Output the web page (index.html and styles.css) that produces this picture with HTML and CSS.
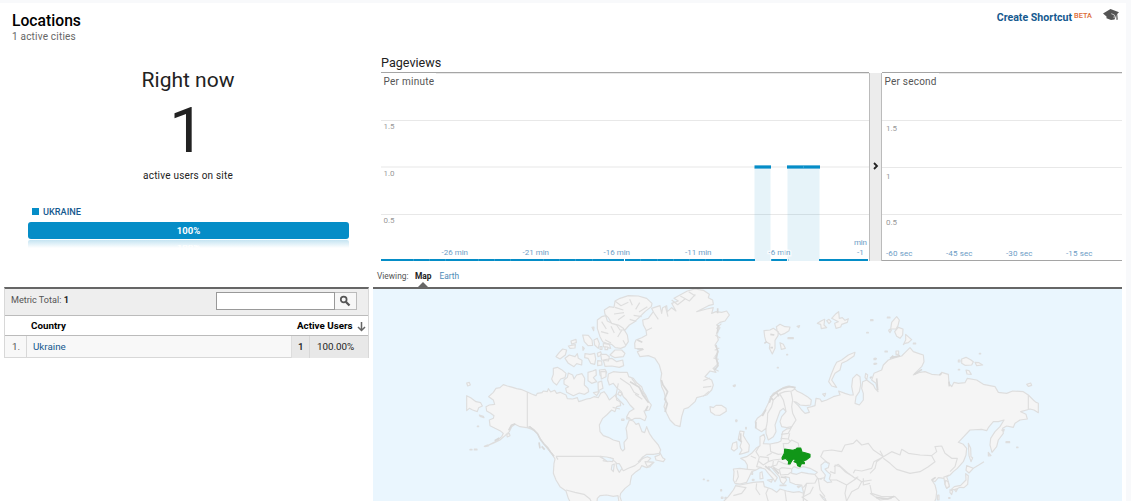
FILE: index.html
```html
<!DOCTYPE html>
<html lang="en">
<head>
<meta charset="utf-8">
<title>Locations</title>
<link rel="stylesheet" href="styles.css">
</head>
<body>
<main class="page">
  <header class="header">
    <div>
      <h1 class="title">Locations</h1>
      <div class="subtitle">1 active cities</div>
    </div>
    <div class="tools">
      <a class="shortcut">Create Shortcut</a><span class="beta">BETA</span>
      <svg class="cap" width="16" height="12" viewBox="0 0 16 12"><path d="M0 4.600 7.500 0 16 3.200 14.200 5l.6 5.500-1.300.5-.3-5.300-1.700 4.800L8 11 3.500 9.200V7.500z" fill="#555"/><path d="m8.300 4.700 3.200 1.300-.5 3" fill="none" stroke="#ddd" stroke-width=".8"/></svg>
    </div>
  </header>
  <div class="columns">
    <section class="left">
      <div class="now">
        <div class="now-label">Right now</div>
        <div class="now-count">1</div>
        <div class="now-caption">active users on site</div>
      </div>
      <div class="legend"><i class="swatch"></i>UKRAINE</div>
      <div class="bar">100%</div>
      <div class="reflection"><span>100%</span></div>
      <div class="table">
        <div class="filter">
          <span class="metric">Metric Total: <b>1</b></span>
          <span class="search"><input class="search-input" aria-label="Search"><button class="search-button" aria-label="Search"><svg width="12" height="12" viewBox="0 0 12 12" fill="none" stroke="#555"><circle cx="4.700" cy="4.500" r="2.900" stroke-width="1.700"/><path d="m7 7 3.500 3.500" stroke-width="2.300"/></svg></button></span>
        </div>
        <div class="row head"><span></span><span class="country">Country</span><span class="users">Active Users<svg width="9" height="11" viewBox="0 0 9 11" fill="none" stroke="#666" stroke-width="1.500"><path d="M4.500 1v8.500M1 6l3.500 3.500L8 6"/></svg></span></div>
        <div class="row data"><span class="index">1.</span><span class="name">Ukraine</span><span class="value">1</span><span class="percent">100.00%</span></div>
      </div>
    </section>
    <section class="right">
      <h2 class="chart-title">Pageviews</h2>
      <div class="charts">
        <svg class="minute" width="488" height="189" viewBox="381 72 488 189">
          <path d="M436 73.500H869M381 120.500H869M381 214.500H869" stroke="#e8e8e8"/>
          <path d="M381 167H869" stroke="#f3f3f3" stroke-width="2"/>
          <path d="M381 72.500H869" stroke="#a5a5a5"/>
          <path d="M754.500 167h16v94h-16zM787.500 167h32v94h-32z" fill="#058dc7" fill-opacity=".1"/>
          <path d="M381 260H755M771 260H787M819 260H868M754.500 167H771M787 167H820" stroke="#058dc7" stroke-width="2"/>
          <path d="M754.500 165.500H771M787 165.500H820M754.500 168.500H771M787 168.500H820" stroke="#62b6dc"/>
          <path d="M413.500 259v2m16-2v2m16-2v2m33-2v2m16-2v2m16-2v2m33-2v2m16-2v2m16-2v2m17-2v2m32-2v2m16-2v2m17-2v2m16-2v2m16-2v2m16-2v2m17-2v2m49-2v2m17-2v2M803.500 166v2" stroke="#55b1d9" stroke-opacity=".5"/>
          <path d="M624.500 259v2" stroke="#fff"/>
          <text class="chart-name" x="383.500" y="85" textLength="50.500">Per minute</text>
          <g class="y-label"><text x="383.500" y="129">1.5</text><text x="383.500" y="176">1.0</text><text x="383.500" y="223">0.5</text></g>
          <g class="x-label"><text x="441.500" y="255" textLength="26.500">-26 min</text><text x="522.500" y="255" textLength="26.500">-21 min</text><text x="603.500" y="255" textLength="26.500">-16 min</text><text x="685" y="255" textLength="26.500">-11 min</text><text class="halo" x="768.500" y="255" textLength="22">-6 min</text><text x="854" y="245" textLength="13">min</text><text x="857" y="255">-1</text></g>
        </svg>
        <div class="splitter"><svg width="6" height="8" viewBox="0 0 6 8"><path d="m1 1 3 3-3 3" fill="none" stroke="#222" stroke-width="1.800"/></svg></div>
        <svg class="second" width="240" height="189" viewBox="882 72 240 189">
          <path d="M939 73.500H1122M882 120.500H1122M882 167.500H1122M882 214.500H1122" stroke="#e8e8e8"/>
          <path d="M882 72.500H1122M882 260.500H1122" stroke="#a5a5a5"/>
          <text class="chart-name" x="884.500" y="85" textLength="52">Per second</text>
          <g class="y-label"><text x="886" y="131">1.5</text><text x="886" y="179">1</text><text x="886" y="225">0.5</text></g>
          <g class="x-label"><text x="886" y="256" textLength="26.500">-60 sec</text><text x="946" y="256" textLength="26.500">-45 sec</text><text x="1006" y="256" textLength="26.500">-30 sec</text><text x="1066" y="256" textLength="26.500">-15 sec</text></g>
        </svg>
      </div>
      <nav class="tabs"><span class="viewing">Viewing:</span><b class="map-tab">Map</b><span class="earth-tab">Earth</span></nav>
      <div class="map">
        <svg width="749" height="212" viewBox="373 289 749 212">
          <g transform="translate(460 285) scale(.33333)" class="land">
            <path d="M86 335 100 322 108 310 120 308 130 299 142 303 158 307 170 311 186 314 202 321 215 327 228 332 232 325 246 323 250 318 262 320 265 311 272 321 284 316 290 325 300 322 318 330 322 341 338 342 352 338 356 350 366 347 380 342 392 340 402 335 415 338 422 325 432 320 440 330 448 345 460 335 468 328 470 345 480 350 482 362 470 365 465 380 455 375 440 390 428 400 418 420 420 440 430 452 445 457 460 465 478 470 482 490 488 498 494 492 492 472 502 460 500 440 498 430 504 415 508 405 520 408 528 418 536 415 542 430 546 440 554 443 560 425 568 445 578 460 595 480 602 495 598 505 580 508 560 508 550 515 535 530 550 520 562 515 572 520 560 532 580 532 570 545 560 548 545 542 540 552 528 560 515 572 512 585 510 598 495 610 482 625 480 635 488 660H478L474 632 460 634 440 630 420 632 412 640 410 660H335L325 640 318 618 300 605 288 585 280 565 282 535 285 522 275 505 262 490 250 475 240 460 232 445 220 435 210 425 200 428 180 425 165 418 155 425 148 440 135 452 120 465 100 475 75 485 110 468 125 455 130 445 120 437 105 430 90 422 88 405 100 400 102 392 92 385 80 378 78 365 88 360 104 358 100 345Z"/>
            <path class="border" d="M202 321V428L220 435M288 514H417L432 522 450 518 465 530 480 545 490 557 505 550 525 542 540 530 548 515M288 514 294 524M318 615 345 622 372 628 390 642 396 655M428 527 445 530"/>
            <path class="thick" d="m208 425 14 10 11 12 8 16 11 14 10 10 10 15 10 12m-45-42 3 18m5-6 9 10m-88-78-12 5-8 15m-28 23-14 8"/>
            <path d="M20 332 32 338 48 350 62 353 67 363 56 368 52 380 38 375 28 370 20 377ZM20 294 28 292 31 300 23 303ZM58 390 70 394 72 398 60 394ZM52 423h4v2h-4zM30 493h6v2h-6zM43 492h8v3h-8zM73 484 82 480 85 483ZM140 448 148 445 150 452 142 456Z"/>
            <path d="M280 250 292 247 305 254 318 265 315 278 302 282 290 300 280 292 275 282 280 268ZM312 285 322 277 325 264 338 270 342 282 350 270 366 266 374 280 373 300 384 310 386 320 374 328 358 324 340 332 320 322 317 310 326 305 312 297ZM288 215 298 202 308 192 320 195 316 210 300 222ZM315 220 328 210 345 215 352 206 355 220 366 226 365 240 350 236 342 245 325 235ZM333 168 348 163 349 173 335 177ZM325 183 346 179 345 189 330 190ZM368 150 385 151 396 165 398 181 384 182 373 170ZM402 165 412 160 418 176 415 190 404 180ZM396 127 402 126 401 137ZM368 185 373 190 369 196ZM375 206 390 208 404 205 407 222 404 238 392 235 384 220 374 218ZM412 205 422 200 425 210 414 215ZM413 227 425 228 426 240 413 242ZM384 262 398 258 408 254 409 270 400 278 410 290 395 295 384 287ZM418 255 435 253 440 262 428 278 420 270ZM414 292 425 288 429 310 415 317ZM400 323 418 320 410 332Z"/>
            <path d="M412 105 425 95 437 92 442 108 455 115 475 120 490 130 502 150 505 170 495 185 482 190 466 188 455 178 440 175 428 170 420 155 412 130ZM433 75 448 65 462 67 465 48 480 40 505 32 535 33 560 40 576 55 574 65 555 80 540 95 524 110 508 120 495 135 480 135 470 120 455 115 445 98 435 88ZM450 210 465 195 485 195 495 205 490 215 465 218ZM430 225 455 220 470 230 488 225 491 242 478 247 455 243 435 244ZM430 175 448 178 452 190 430 185ZM422 208 438 208 448 215 445 228 425 225Z"/>
            <path class="border" d="m465 48 18 14 22-10m-40 15 25 8m-28 12 30-4m-18 22 20-14m15-48 8 18m22-8-12 20m35-8-25 16m8 14-24-4m8 18-20-6M425 110l14 22m-16 8 22 6m8-22 10 20m22-8-12 20m-38 8 18 10m36-8 8 14"/>
            <path d="M445 267 460 260 480 262 502 262 506 275 520 280 532 295 545 305 550 320 558 332 565 348 574 360 568 375 552 378 559 395 555 407 540 400 525 400 515 405 500 395 508 380 522 372 510 360 500 345 490 335 484 320 470 308 460 295 448 300 443 285ZM422 260 438 260 438 275 424 282Z"/>
          </g>
          <g transform="translate(600 285) scale(.33333)" class="land">
            <path d="M104 175 108 165 125 158 140 150 138 135 130 120 128 105 145 100 160 80 155 70 180 62 185 85 188 68 200 62 202 80 215 68 228 78 215 55 235 48 222 40 240 30 262 18 285 12 310 16 328 28 325 38 338 45 340 58 325 62 290 80 320 72 340 68 335 85 348 80 365 82 380 78 388 90 375 108 360 112 350 120 360 128 350 145 355 165 345 180 355 200 345 215 355 235 340 250 348 262 330 258 315 275 335 285 340 300 335 315 320 330 290 338 285 350 265 368 252 372 245 395 240 425 225 420 210 405 200 385 192 365 198 345 192 320 185 305 182 285 185 265 178 240 165 220 145 212 120 215 112 200 130 193 105 190Z"/>
            <path class="border" d="m215 45 18 14 22-17m-14-9 27 15 18-20m-20-8 20 13m-90 30 8 32m-44-14 15 22m-37 34 18-9m208-12-15 15m12 28-15-8m12 38-14 7m12 27-16-4m16 40-18-10m-8 30-20 8m24 17-25 3m18 12-18 15M60 280l30 20 12 22 15 8m-22-50 14 18m-4 30 22 15m-12-38 24 32m-84-42-8 40 25 25m-12 12-22-5"/>
            <path class="thick" d="m184 285 5 15 14 20-9 22 8 14-7 25M353 70v15m2 35-3 25m-4 35 5 20-4 20 5 22-10 12M90 290l28 17 10 22 18 24m-2 10-8 15M112 165l15 7m-15 20h17"/>
            <path d="M330 365 340 368 348 361 364 361 378 370 379 379 360 391 345 390 332 381ZM165 515 178 510 180 503 188 518 195 523 190 530 168 525ZM135 530 162 532 150 541 142 545ZM80 398h7v4h-7zM65 402h7v4h-7zM58 320l8 5-4 8-9-5ZM0 185h6v8H0zM15 186h8v8h-8zM400 302l5-2 1 3-6 1ZM408 405h2v5h-2ZM310 582h3v2h-3zM322 586h4v2h-4zM362 614h3v4h-3zM364 636h5v4h-5zM375 637h4v4h-4z"/>
            <path class="water" d="M0 514 20 516 40 521 38 530 20 528ZM36 540 43 537 40 560 34 553ZM48 536 58 536 66 550 58 562 51 550Z"/>
          </g>
          <g transform="translate(720 285) scale(.33333)" class="land">
            <path d="M108 430 106 410 112 400 125 390 135 375 145 355 150 340 160 325 175 318 190 308 205 303 220 306 230 318 245 325 262 335 274 345 272 360 258 362 240 360 230 352 222 350 235 362 245 375 255 385 268 382 262 368 275 365 285 362 288 340 300 342 305 350 320 345 340 335 360 330 356 318 375 325 390 330 400 330 395 305 398 280 410 268 420 275 422 300 418 320 408 335 405 355 418 360 430 345 430 325 425 310 428 290 440 285 460 300 465 310 474 320 468 295 455 285 462 265 485 255 490 240 505 225 525 218 545 213 558 200 570 188 580 200 595 205 610 210 612 230 605 245 580 270 600 262 615 260 635 268 660 270 665 262 685 268 687 295 695 305 702 292 715 295 735 293 742 280 770 285 790 298 825 305 835 322 860 325 878 318 910 320 925 330 940 345 948 352 955 355V383L942 375 930 372 920 375 902 380 918 388 922 402 900 405 885 415 880 427 860 423 848 430 850 445 835 465 830 485 816 502 810 480 812 460 825 440 840 425 852 405 835 410 820 410 805 428 800 437 785 433 750 435 715 472 730 478 740 490 738 510 730 530 712 550 700 560 690 570 680 575 685 590 688 605 680 610 675 598 672 580 655 578 645 590 635 585 645 600 650 620 648 640 640 660H250L250 620 245 600 225 598 210 592 208 578 195 575 200 585 190 598 182 590 178 575 165 560 155 548 145 545 150 555 165 570 172 578 165 590 160 582 145 565 135 552 120 548 108 555 95 560 88 575 80 592 60 597 45 595 40 585 42 560 40 552 60 550 82 553 82 540 75 528 62 520 80 515 95 505 108 490 120 482 120 455 132 448 135 460 130 476 150 477 175 472 183 468 185 455 188 440 200 432 212 430 215 425 200 428 185 425 180 410 185 395 198 380 190 370 180 378 172 400 165 420 168 440 160 455 145 465 138 445 138 430 125 440Z"/>
            <path d="M0 660 25 635 40 615 48 600 60 600 100 592 130 590 133 605 155 612 170 622 180 612 200 618 220 622 238 620 250 625 250 660Z"/>
            <path class="water" d="M215 565 215 552 222 545 235 550 250 545 270 550 292 562 285 568 265 566 245 562 230 568ZM303 540 315 530 328 535 325 548 315 552 322 560 332 568 328 582 335 591 322 593 312 585 316 570 304 555ZM300 628 315 640 320 652 308 640Z"/>
            <path class="border" d="M138 430 142 410 143 385 155 365 160 345 180 325 195 320 215 318 225 312M198 380 195 365 190 345 180 328M212 430 228 405 218 385 215 365 218 345 213 320M183 448 205 445 212 432M182 460 205 462 209 445M188 476 205 475 215 465 235 475 237 490M205 462 210 468M190 476 192 494M150 477 152 500 175 508 188 507M118 483 108 500 118 516 115 528 130 540 145 530 160 525 185 522M82 553 108 555M52 556 55 575 47 592M92 513 108 520M115 528 110 545 125 548M140 512 155 505M145 530 145 518 120 515M152 545 170 540 175 528 190 535 210 540M160 528 158 545 175 555 185 548 213 551M178 555 182 570 205 568 213 562M48 603 78 608 65 625 40 632M110 595 108 612 120 630M145 610 138 625 145 650M195 618 200 655M250 608 260 595 285 594 292 580 305 583M285 570 295 582 315 578M295 582 300 615 315 635M260 595 250 635 270 625 280 605M245 635 265 650 290 655M330 585 350 585 380 600 375 625 380 650M330 560 345 565 345 540 360 545 375 560 400 575M342 545 355 538 385 565 405 580 415 575M400 565 405 555 425 558 455 550 462 530 490 515M325 535 302 515 310 498 335 495 365 500 375 480 400 475 410 465 425 480 445 475 460 495 490 515M380 600 410 580 425 590 455 585M425 590 415 610 395 620 380 648M430 580 430 600 450 595M480 497 490 515 515 500 540 510 545 493 565 505 600 510 635 512 645 530 625 545 600 560 570 565 530 553 510 535 490 520M635 512 650 500 645 485 665 483 675 505 695 520 712 520 705 545 690 560M490 515 470 530 465 550 450 565M450 600 455 625 485 635 525 635 545 655M450 625 480 645 515 640M670 577 688 570M925 330V372"/>
            <path d="M60 438 72 440 70 452 78 465 88 480 86 500 70 505 58 508 66 495 60 485 65 470 55 460ZM38 475 50 470 52 490 42 498 34 492ZM95 563h3v5h-3zM120 563 126 560 129 580 120 582ZM142 585 158 583 154 592ZM180 600h18v2h-18zM232 604 243 602 235 608ZM97 583h5v3h-5z"/>
            <path d="M405 202 402 213 380 228 365 235 360 255 345 265 335 285 350 307 335 303 326 290 333 270 343 245 350 232 365 225 385 210ZM308 327l9-2-3 9ZM437 265l6 5-3 15-5-8ZM132 137 150 135 160 130 175 140 174 152 165 166 165 190 157 207 148 190 150 177 138 170 134 155ZM169 125 180 118 195 125 210 126 207 137 195 145 182 150 172 140ZM180 173 190 178 196 190 184 193ZM231 124 239 122 236 128ZM204 158h16v3h-16zM172 247h3v2h-3zM200 208h3v2h-3zM292 115 303 108 314 103 312 120 320 128 304 131 302 118ZM320 107 327 103 333 110 327 116ZM335 100 348 86 356 80 358 100 367 98 375 106 385 101 382 112 365 118 362 126 348 130 344 115 355 110ZM40 302l6-2-3 5ZM452 104h7v3h-7zM440 142h5v2h-5zM465 220h4v2h-4zM465 235h5v2h-5zM47 405h4v3h-4zM77 427h2v5h-2z"/>
            <path class="thick" d="m108 410-1 20m20-37 11-20m10-20 6-18 20-17 15-8 20-5 18 3m-76 26 8 12m11-22 7 10M133 175l8-5m10 18h8m-8-40 12 2M62 445v25m-8-8 10 8M160 548l17 18m5 10 15 2m-62-35 15 12"/>
            <path class="ukraine" d="m194 492 25 4 10-4 2-3h11l4 12 12 3 12 4v8l-12 9-12 4 7 3v4l-8-1-5 10-7-3-3-9-8-3 6-6-8-2-5 6-5 9h-5l1-8-9-9-10 3-1-5 7-13Z"/>
          </g>
          <g transform="translate(870 285) scale(.33333)" class="land">
            <path d="M65 112 75 100 80 95 88 105 84 122 78 132 62 132ZM74 140 85 127 99 132 98 150 90 160 80 154ZM100 179 107 165 107 148 118 158 125 164 115 173 105 175ZM52 96h8v3h-8zM58 133l6 3-4 7-4-6ZM130 174h7v3h-7zM45 198h7v3h-7zM78 198h8v10h-8zM275 222 288 217 302 224 310 230 305 240 285 241 275 235ZM315 232 327 233 338 240 320 242ZM265 225h5v6h-5zM288 255 297 257 304 268 291 267ZM265 253h4v2h-4zM328 205h4v2h-4zM470 298 482 294 485 301 475 304ZM12 220h5v4h-5zM12 235h4v3h-4zM395 435l8-2-2 6ZM408 470h11v3h-11zM440 486h4v2h-4zM355 502l8 10-8 1ZM295 475 302 490 303 515 308 518 303 530 297 512ZM290 542 310 550 297 564 288 556ZM287 566 295 572 293 598 282 608 270 607 255 614 244 613 253 605 272 601 288 585ZM240 614 248 618 245 629 240 623ZM227 586 234 590 238 604 230 610 225 598ZM253 614 263 611 258 620ZM236 638h4v2h-4zM203 630h4v15h-5ZM310 550l15-9 17-11"/>
            <path class="thick" d="m65 218 25-6m-30 9 10-9m63 56 23-15m52 17 7-5m22 25 1 14M20 280l3 35M5 275l-5 5M185 585l12-8M18 637l35 5 20-8"/>
          </g>
        </svg>
      </div>
    </section>
  </div>
</main>
</body>
</html>
```
FILE: styles.css
```css
* { box-sizing: border-box; }
body { margin: 0; width: 1131px; height: 501px; overflow: hidden; padding-top: 3px; background: #f8f9fb; font-family: Roboto, "Liberation Sans", sans-serif; color: #222; }
.page { width: 1126px; height: 498px; background: #fff; }
.header { height: 48px; display: flex; justify-content: space-between; padding: 8px 7px 0 12px; }
.title { margin: 0; font-size: 15.700px; line-height: 20px; font-weight: 500; color: #000; }
.subtitle { font-size: 10px; line-height: 12px; letter-spacing: .2px; color: #666; }
.tools { display: flex; height: 16px; }
.shortcut { font-size: 10.600px; line-height: 14px; font-weight: 700; color: #15598f; }
.beta { margin: 0 11px 0 2px; font-size: 7.400px; line-height: 10px; font-weight: 500; color: #dd6b35; }
.cap { margin-top: -2px; }
.columns { display: flex; }
.left { width: 369px; height: 450px; padding-left: 4px; }
.now { height: 153px; padding: 14px 0 0 3px; text-align: center; }
.now-label { font-size: 21px; line-height: 30px; }
.now-count { font-size: 63px; line-height: 72px; margin-left: -2px; }
.now-caption { font-size: 10px; line-height: 18px; letter-spacing: .2px; }
.legend { display: flex; align-items: center; height: 15px; margin-left: 28px; font-size: 9.200px; font-weight: 500; color: #15598f; }
.swatch { width: 7px; height: 7px; margin-right: 4px; background: #058dc7; }
.bar { width: 321px; height: 17px; margin: 3px 0 0 24px; border-radius: 3px; background: #058dc7; color: #fff; font-size: 9.500px; line-height: 17px; font-weight: 700; text-align: center; }
.reflection { display: flex; align-items: flex-end; justify-content: center; width: 321px; height: 8px; margin: 1px 0 0 24px; background: linear-gradient(#c5e4f2, #fff); color: #fff; font-size: 9.500px; font-weight: 700; line-height: 8px; border-radius: 2px 2px 0 0; }
.reflection span { transform-origin: bottom; transform: scaleY(.4); }
.table { width: 365px; height: 71px; margin-top: 39px; border: 1px solid #d8d8d8; border-top: 2px solid #666; }
.filter { display: flex; justify-content: space-between; height: 27px; padding: 3px 11px 0 6px; background: #eee; border-bottom: 1px solid #bbb; }
.metric { font-size: 9.100px; line-height: 17px; color: #555; }
.metric b { color: #222; font-weight: 700; }
.search { display: flex; width: 141px; height: 18px; }
.search-input { width: 119px; height: 18px; border: 1px solid #999; padding: 0; background: #fff; }
.search-button { width: 22px; height: 18px; border: 1px solid #bbb; border-left: 0; padding: 0 2px 0 0; background: #f7f7f7; display: flex; align-items: center; justify-content: center; }
.row { display: grid; font-size: 9.800px; }
.head { grid-template-columns: 22px 1fr 78px; height: 20px; line-height: 20px; font-weight: 700; border-bottom: 1px solid #bbb; color: #000; }
.country { padding-left: 4px; }
.users { display: flex; align-items: center; justify-content: space-between; padding-right: 2px; margin-left: 7px; white-space: nowrap; }
.data { grid-template-columns: 22px 1fr 19px 58px; height: 21px; line-height: 22px; background: #f8f8f8; }
.index { padding-left: 7px; border-right: 1px solid #d8d8d8; color: #555; }
.name { padding-left: 6px; color: #15598f; }
.value { padding-left: 6px; border-left: 1px solid #ddd; border-right: 1px solid #d8d8d8; background: #e8e8e8; font-weight: 500; }
.percent { padding-left: 7px; background: #e8e8e8; }
.right { width: 753px; padding-left: 4px; }
.chart-title { height: 21px; margin: 0 0 0 8px; font-size: 12.600px; line-height: 24px; font-weight: 400; }
.charts { display: flex; margin-left: 8px; }
.minute, .second { display: block; flex: none; }
.splitter { width: 13px; height: 188px; margin-top: 1px; padding-bottom: 2px; display: flex; align-items: center; justify-content: center; background: #ececec; border: solid #bbb; border-width: 0 1px; }
.chart-name { font-size: 10px; fill: #555; }
.y-label { font-size: 8px; fill: #999; }
.x-label { font-size: 8px; fill: #6c9cc5; }
.halo { stroke: #fff; stroke-width: 3px; stroke-opacity: .7; paint-order: stroke; }
.tabs { display: flex; height: 26px; padding: 9px 0 0 4px; font-size: 8.400px; line-height: 13px; }
.viewing { width: 38px; color: #555; }
.map-tab { position: relative; width: 24.500px; font-weight: 700; color: #222; }
.map-tab::after { content: ""; position: absolute; left: 3px; top: 12px; border: solid transparent; border-width: 0 5px 5px; border-bottom-color: #666; }
.earth-tab { color: #4d8bb8; }
.map { height: 214px; border-top: 2px solid #666; background: #eaf6fe; overflow: hidden; }
.map svg { display: block; }
.land { fill: #f5f5f5; stroke: #dedede; stroke-width: 3.500; stroke-linejoin: round; }
.border { fill: none; }
.thick { fill: none; stroke: #d9d9d9; stroke-width: 5; }
.water { fill: #eaf6fe; }
.ukraine { fill: #109618; stroke: #109618; }
```
